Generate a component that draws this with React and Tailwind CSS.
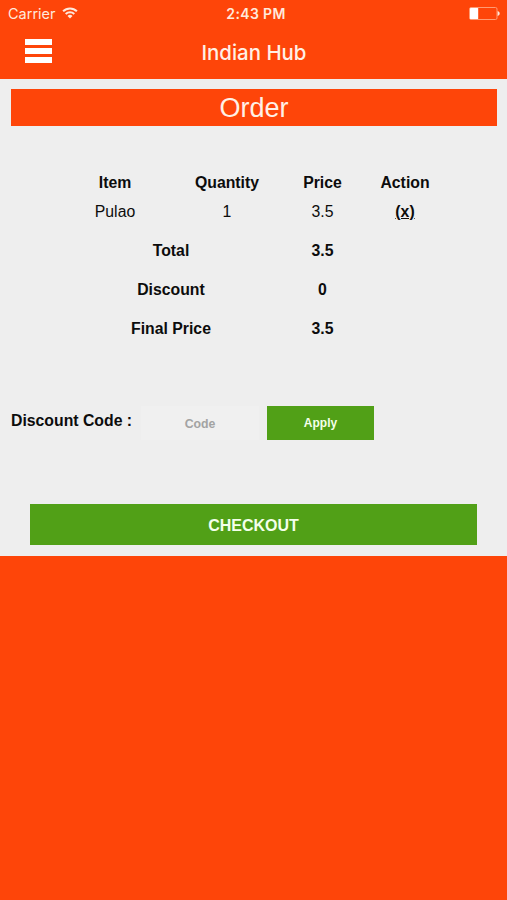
import React, { useState } from 'react';

const StatusBar = () => (
  <div className="grid h-[27px] grid-cols-3 items-center pl-[8px] pr-[7px] leading-none text-[#ffe9dc]">
    <div className="flex items-center gap-[6px]">
      <span className="pt-[2px] text-[14.5px]">Carrier</span>
      <svg width="16" height="12" viewBox="0 0 16 12" className="-mt-[2px]" fill="none" stroke="currentColor" strokeWidth="2">
        <path d="M1.1 4.3a9.8 9.8 0 0 1 13.8 0" />
        <path d="M3.7 7a6.1 6.1 0 0 1 8.6 0" />
        <path d="M8 11.6 5.5 9a3.5 3.5 0 0 1 5 0z" fill="currentColor" stroke="none" />
      </svg>
    </div>
    <span className="pl-[4px] text-center text-[14px] font-semibold tracking-[0.35px]">2:43 PM</span>
    <svg className="justify-self-end" width="31" height="13" viewBox="0 0 31 13">
      <rect x="0.5" y="0.5" width="27.5" height="12" rx="1.5" fill="none" stroke="#ff9b73" />
      <rect x="1" y="1" width="8.2" height="11" rx="0.5" fill="#fff" />
      <path d="M28.6 4c2.8.8 2.8 4.2 0 5z" fill="#ffe9dc" />
    </svg>
  </div>
);

const Header = () => (
  <header className="h-[79px] bg-[#fe4509] font-['Inter',sans-serif]">
    <StatusBar />
    <div className="grid h-[52px] grid-cols-[80px_1fr_80px]">
      <button type="button" aria-label="Menu" className="flex flex-col gap-[3px] pl-[25px] pt-[12px]">
        <span className="h-[6px] w-[27px] bg-white" />
        <span className="h-[6px] w-[27px] bg-white" />
        <span className="h-[6px] w-[27px] bg-white" />
      </button>
      <h1 className="pl-[1px] pt-[11px] text-center text-[20.4px] font-medium leading-[30px] text-[#fff0e6]">Indian Hub</h1>
    </div>
  </header>
);

const OrderTable = ({ items, discount, onRemove }) => {
  const total = items.reduce((sum, item) => sum + item.price * item.quantity, 0);
  const summary = [
    { label: 'Total', value: total },
    { label: 'Discount', value: discount },
    { label: 'Final Price', value: total - discount },
  ];

  return (
    <table className="ml-[59px] mt-[47px] w-[389px] table-fixed border-collapse text-center text-[15.8px] leading-[20px] text-[#0c0c0c]">
      <colgroup>
        <col className="w-[112px]" />
        <col className="w-[112px]" />
        <col className="w-[79px]" />
        <col className="w-[86px]" />
      </colgroup>
      <thead>
        <tr className="h-[20px]">
          <th className="p-0">Item</th>
          <th className="p-0">Quantity</th>
          <th className="p-0">Price</th>
          <th className="p-0">Action</th>
        </tr>
      </thead>
      <tbody>
        {items.map((item) => (
          <tr key={item.name} className="h-[38px]">
            <td>{item.name}</td>
            <td>{item.quantity}</td>
            <td>{item.price}</td>
            <td className="pb-[1px]">
              <button type="button" onClick={() => onRemove(item.name)} className="font-bold underline">
                (x)
              </button>
            </td>
          </tr>
        ))}
        {summary.map((row) => (
          <tr key={row.label} className="h-[39px] font-bold">
            <td colSpan={2}>{row.label}</td>
            <td>{row.value}</td>
            <td />
          </tr>
        ))}
      </tbody>
    </table>
  );
};

const App = () => {
  const [items, setItems] = useState([{ name: 'Pulao', quantity: 1, price: 3.5 }]);
  const [code, setCode] = useState('');

  const removeItem = (name) => {
    setItems((prev) => prev.filter((item) => item.name !== name));
  };

  return (
    <div className="min-h-screen bg-[#fe4509] font-['Liberation_Sans',Arial,sans-serif]">
      <Header />
      <main className="h-[477px] bg-[#eeeeee] pt-[10px]">
        <h2 className="mx-[11px] h-[37px] w-[486px] bg-[#fe4509] text-center text-[27px] leading-[39px] text-[#fff0e6]">
          Order
        </h2>

        <OrderTable items={items} discount={0} onRemove={removeItem} />

        {/* Discount code */}
        <div className="mt-[58px] flex h-[34px] items-start pl-[11px]">
          <label htmlFor="code" className="w-[130px] pt-[5px] text-[15.8px] font-bold leading-[20px] text-[#0c0c0c]">
            Discount Code :
          </label>
          <input
            id="code"
            type="text"
            value={code}
            onChange={(e) => setCode(e.target.value)}
            placeholder="Code"
            className="h-[34px] w-[118px] bg-[#f0f0f0] pt-[2px] text-center text-[12.3px] font-bold placeholder:text-[#a3a3a3]"
          />
          <button type="button" className="ml-[8px] h-[34px] w-[107px] bg-[#51a017] text-[12px] font-bold text-[#f4ffea]">
            Apply
          </button>
        </div>

        <button
          type="button"
          className="ml-[30px] mt-[64px] block h-[41px] w-[447px] bg-[#51a017] pt-[2px] text-[16px] font-bold text-[#f4ffea]"
        >
          CHECKOUT
        </button>
      </main>
    </div>
  );
};

export default App;
